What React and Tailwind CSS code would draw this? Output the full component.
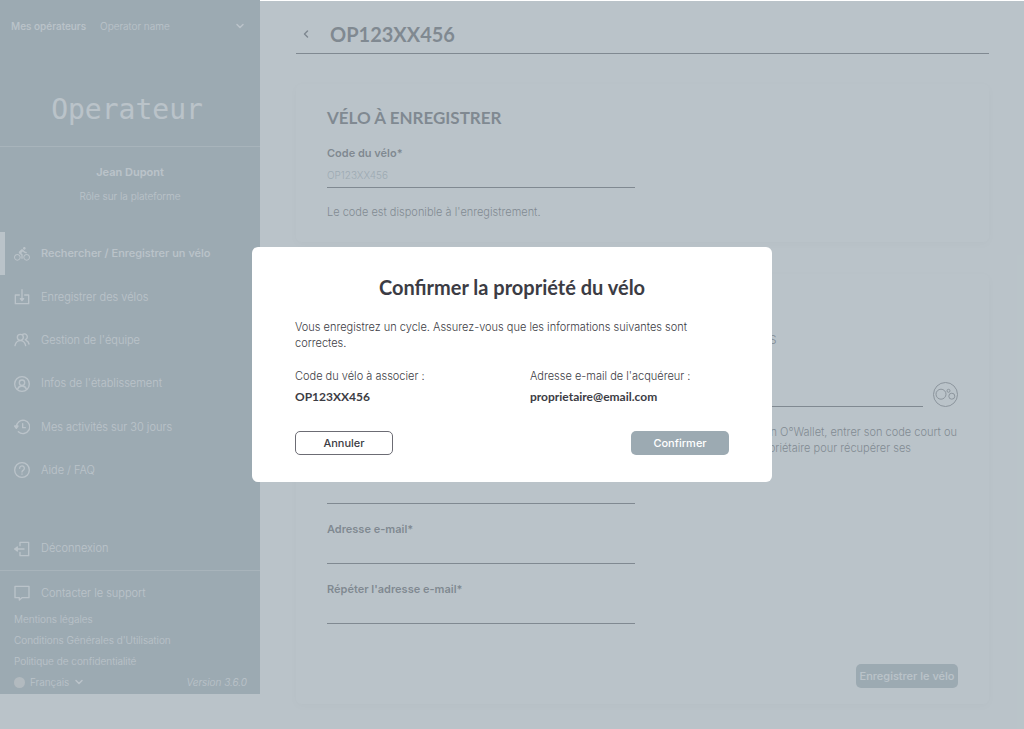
import { useState } from "react";
import { ChevronDown, ChevronLeft } from "lucide-react";
import { MdDirectionsBike } from "react-icons/md";

const Icon = ({ children }) => (
  <svg
    viewBox="0 0 24 24"
    className="w-4 h-4 shrink-0"
    fill="none"
    stroke="currentColor"
    strokeWidth="2"
    strokeLinecap="round"
    strokeLinejoin="round"
    aria-hidden="true"
  >
    {children}
  </svg>
);

const ImportIcon = () => (
  <Icon>
    <path d="M8 9H2v13h20V9h-6" />
    <path d="M12 1v14" />
    <path d="M9.5 14.5h5L12 17.5z" fill="currentColor" />
  </Icon>
);

const TeamIcon = () => (
  <Icon>
    <circle cx="9.5" cy="8" r="4.5" />
    <path d="M1.5 20.5c1-4.5 4-7.500 8-7.500s7 3 8 7.500" />
    <path d="M13 3.500a4.500 4.500 0 1 1 4 8" />
    <path d="M18 12.500c2.500 1 4 3 4.500 5.500" />
  </Icon>
);

const ProfileIcon = () => (
  <Icon>
    <circle cx="12" cy="12" r="11" />
    <circle cx="12" cy="10" r="4" />
    <path d="M5.500 19.500c1-3 3.500-4.500 6.500-4.500s5.500 1.500 6.500 4.500" />
  </Icon>
);

const HistoryIcon = () => (
  <Icon>
    <path d="M3.500 12a10 10 0 1 1 3 7" />
    <path d="M1 10.500h5l-2.500 3.500z" fill="currentColor" />
    <path d="M13 7v6h4" />
  </Icon>
);

const HelpIcon = () => (
  <Icon>
    <circle cx="12" cy="12" r="11" />
    <path d="M8.500 9.500a3.500 3.500 0 1 1 5.500 2.800c-1.500 1-2 1.200-2 2.700" />
    <path d="M12 18v.2" />
  </Icon>
);

const LogoutIcon = () => (
  <Icon>
    <path d="M9 7V2h13v20H9v-5" />
    <path d="M4 12h11" />
    <path d="M5 9v6l-4-3z" fill="currentColor" />
  </Icon>
);

const SupportIcon = () => (
  <Icon>
    <path d="M1.500 2h21v17H12l-4 3.500V19H1.500z" />
  </Icon>
);

const WalletIcon = () => (
  <svg
    viewBox="0 0 25 25"
    className="w-[25px] h-[25px] opacity-80"
    fill="none"
    stroke="currentColor"
    aria-hidden="true"
  >
    <circle cx="12.500" cy="12.500" r="12" />
    <circle cx="8" cy="12.200" r="5" />
    <circle cx="18.800" cy="14.200" r="3" />
    <circle cx="15.500" cy="8.800" r="1.500" />
  </svg>
);

const navItems = [
  { label: "Rechercher / Enregistrer un vélo", icon: <MdDirectionsBike className="w-4 h-4 shrink-0" /> },
  { label: "Enregistrer des vélos", icon: <ImportIcon /> },
  { label: "Gestion de l'équipe", icon: <TeamIcon /> },
  { label: "Infos de l'établissement", icon: <ProfileIcon /> },
  { label: "Mes activités sur 30 jours", icon: <HistoryIcon /> },
  { label: "Aide / FAQ", icon: <HelpIcon /> },
];

const Field = ({ id, label, type = "text", placeholder }) => (
  <div className="flex flex-col flex-1">
    <label htmlFor={id} className="text-[11px] leading-5 font-semibold">
      {label}
    </label>
    <input
      id={id}
      type={type}
      placeholder={placeholder}
      className="h-[25px] w-full border-b border-[#3c3c44] text-[10px] font-light outline-none placeholder:text-[#9caab2]"
    />
  </div>
);

const Sidebar = () => (
  <aside className="w-[260px] shrink-0 self-start bg-[#9caab2] text-white font-light">
    <div className="h-[52px] pl-[11px] pr-[14px] flex items-center gap-[14px]">
      <label htmlFor="operator" className="text-[10px] font-medium whitespace-nowrap">
        Mes opérateurs
      </label>
      <div className="flex-1 flex items-center">
        <select id="operator" className="flex-1 appearance-none bg-transparent text-[10px] outline-none">
          <option>Operator name</option>
        </select>
        <ChevronDown className="w-3 h-3" strokeWidth={3} />
      </div>
    </div>

    <div className="pt-10 pb-[18px] pr-[6px] text-center border-b border-white/40 font-['DejaVu_Sans_Mono',monospace] text-[28px] leading-9 font-normal">
      Operateur
    </div>

    {/* Utilisateur */}
    <div className="pt-[13px] text-center leading-6">
      <p className="text-[11px] font-semibold">Jean Dupont</p>
      <p className="text-[10px]">Rôle sur la plateforme</p>
    </div>

    <nav className="mt-6 h-[260px] grid grid-rows-6">
      {navItems.map((item, i) => (
        <a
          key={item.label}
          href="#"
          className={
            i === 0
              ? "flex items-center gap-[11px] pl-[9px] border-l-[5px] border-white text-[11px] font-medium"
              : "flex items-center gap-[11px] pl-[14px] text-[11px]"
          }
        >
          {item.icon}
          {item.label}
        </a>
      ))}
    </nav>

    <a href="#" className="mt-[35px] h-[43px] pl-[14px] flex items-center gap-[11px] text-[11px]">
      <LogoutIcon />
      Déconnexion
    </a>

    <div className="border-t border-white/40 pt-3 pb-[2px] pl-[14px] pr-[13px]">
      <a href="#" className="h-5 flex items-center gap-[11px] text-[11px]">
        <SupportIcon />
        Contacter le support
      </a>
      <div className="mt-[6px] flex flex-col items-start text-[10px] leading-[21px]">
        <a href="#">Mentions légales</a>
        <a href="#">Conditions Générales d'Utilisation</a>
        <a href="#">Politique de confidentialité</a>
      </div>
      <div className="h-5 flex items-center text-[10px]">
        <span className="w-[11px] h-[11px] rounded-full bg-[#e4e0dc] mr-[5px]" />
        <button className="flex items-center gap-1">
          Français
          <ChevronDown className="w-3 h-3" strokeWidth={3} />
        </button>
        <span className="ml-auto italic">Version 3.6.0</span>
      </div>
    </div>
  </aside>
);

const ConfirmDialog = ({ onClose }) => (
  <div className="absolute inset-x-0 top-px bottom-0 pb-px bg-[#9caab2]/70 flex items-center justify-center">
    <div
      role="dialog"
      aria-modal="true"
      aria-labelledby="dialog-title"
      className="w-[520px] rounded-md bg-white px-[43px] pt-6 pb-[27px]"
    >
      <h2 id="dialog-title" className="text-center font-['Lato',sans-serif] text-[20px] leading-8 font-bold">
        Confirmer la propriété du vélo
      </h2>
      <p className="mt-4 text-[11px] leading-4 font-light">
        Vous enregistrez un cycle. Assurez-vous que les informations suivantes sont correctes.
      </p>
      <dl className="mt-[17px] grid grid-cols-[235px_1fr] text-[11px]">
        <div>
          <dt className="leading-4 font-light">Code du vélo à associer :</dt>
          <dd className="mt-[3px] font-['Lato',sans-serif] text-[12px] leading-5 font-bold">OP123XX456</dd>
        </div>
        <div>
          <dt className="leading-4 font-light">Adresse e-mail de l'acquéreur :</dt>
          <dd className="mt-[3px] font-['Lato',sans-serif] text-[12px] leading-5 font-bold">
            proprietaire@email.com
          </dd>
        </div>
      </dl>
      <div className="mt-6 flex justify-between text-[11px] font-medium">
        <button onClick={onClose} className="w-[98px] h-6 rounded-[5px] border border-[#6c6c74]">
          Annuler
        </button>
        <button onClick={onClose} className="w-[98px] h-6 rounded-[5px] bg-[#9caab2] text-white">
          Confirmer
        </button>
      </div>
    </div>
  </div>
);

const App = () => {
  const [open, setOpen] = useState(true);

  return (
    <div className="relative min-h-screen flex bg-white text-[#3c3c44] font-['Inter',sans-serif]">
      <Sidebar />

      <main className="flex-1 pl-9 pr-[35px] pb-6">
        <header className="pt-[18px] pb-[3px] flex items-center gap-[18px] border-b border-[#3c3c44]">
          <button aria-label="Retour" className="pl-1">
            <ChevronLeft className="w-3 h-3" strokeWidth={3} />
          </button>
          <h1 className="font-['Lato',sans-serif] text-[20px] leading-8 font-bold">OP123XX456</h1>
        </header>

        <section className="mt-[30px] px-[31px] py-[22px] rounded-md shadow-[0_2px_8px_rgba(60,60,68,0.08)]">
          <h2 className="font-['Lato',sans-serif] text-[17px] leading-6 font-bold">VÉLO À ENREGISTRER</h2>
          <div className="mt-[13px] grid grid-cols-2 gap-4">
            <Field id="bike-code" label="Code du vélo*" placeholder="OP123XX456" />
          </div>
          <p className="mt-4 text-[11px] leading-4 font-light">Le code est disponible à l'enregistrement.</p>
        </section>

        <section className="mt-8 px-[31px] pt-[22px] pb-4 rounded-md shadow-[0_2px_8px_rgba(60,60,68,0.08)] flex flex-col">
          <h2 className="font-['Lato',sans-serif] text-[17px] leading-6 font-bold">PROPRIÉTAIRE</h2>
          <div className="mt-[10px] grid grid-cols-2 gap-4">
            <div>
              <h3 className="text-[12px] leading-5 font-light">SAISIE MANUELLE</h3>
              <p className="mt-2 mb-[9px] text-[11px] leading-4 font-light">
                Renseigner les informations du propriétaire
                <br />
                du vélo.
              </p>
              <div className="flex flex-col gap-[15px]">
                <Field id="last-name" label="Nom*" />
                <Field id="first-name" label="Prénom*" />
                <Field id="email" label="Adresse e-mail*" type="email" />
                <Field id="email-repeat" label="Répéter l'adresse e-mail*" type="email" />
              </div>
            </div>

            <div>
              <h3 className="text-[12px] leading-5 font-light">SAISIR VOS DONNÉES</h3>
              <div className="mt-3 flex items-end gap-[10px]">
                <Field id="wallet" label="Code court" />
                <button aria-label="Scanner">
                  <WalletIcon />
                </button>
              </div>
              <p className="mt-[17px] text-[11px] leading-4 font-light">
                Si l'acheteur possède un O°Wallet, entrer son code court ou scanner la carte du propriétaire pour
                récupérer ses informations.
              </p>
            </div>
          </div>
          <button
            onClick={() => setOpen(true)}
            className="mt-10 self-end w-[102px] h-6 rounded-[5px] bg-[#9caab2] text-white text-[11px] font-medium whitespace-nowrap"
          >
            Enregistrer le vélo
          </button>
        </section>
      </main>

      {open && <ConfirmDialog onClose={() => setOpen(false)} />}
    </div>
  );
};

export default App;
